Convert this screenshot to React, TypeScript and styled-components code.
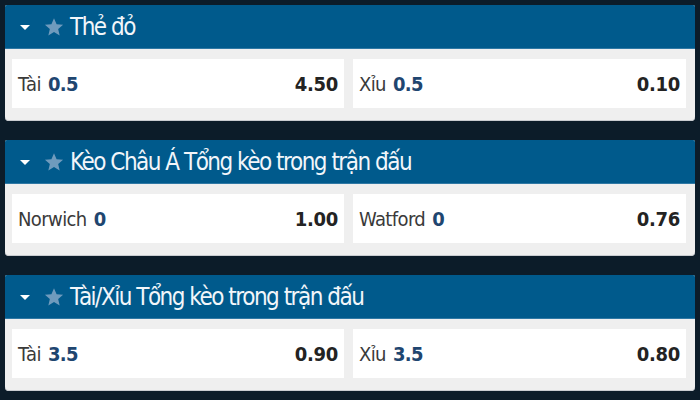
import styled, { createGlobalStyle } from "styled-components";

const GlobalStyle = createGlobalStyle`
  html, body {
    margin: 0;
    padding: 0;
    background: #0c1c29;
  }
  body {
    font-family: "DejaVu Sans Condensed", "Liberation Sans", sans-serif;
  }
`;

const Page = styled.div`
  width: 700px;
  height: 400px;
  padding: 5px 5px 0 5px;
  box-sizing: border-box;
  display: flex;
  flex-direction: column;
  gap: 19px;
  background: #0c1c29;
`;

const Card = styled.div`
  height: 116px;
  display: flex;
  flex-direction: column;
  border-radius: 2px 2px 4px 4px;
  overflow: hidden;
  background: #efefef;
  box-shadow: inset 0 -1px 0 #c9ccd0;
`;

const Header = styled.div`
  height: 44px;
  flex: none;
  display: flex;
  align-items: center;
  padding-left: 15px;
  background: #005a8c;
  border-bottom: 1px solid #2f78a4;
  box-sizing: border-box;
  color: #f2f6fa;
`;

const Caret = styled.span`
  width: 0;
  height: 0;
  border-left: 5px solid transparent;
  border-right: 5px solid transparent;
  border-top: 5px solid #ffffff;
  margin-top: 2px;
`;

const StarIcon = styled.svg`
  width: 20px;
  height: 20px;
  margin-left: 14px;
  margin-right: 6px;
`;

const Title = styled.span`
  font-size: 24px;
  letter-spacing: -1.5px;
  line-height: 1;
  margin-top: 1px;
`;

const Body = styled.div`
  flex: 1;
  display: grid;
  grid-template-columns: 332px 333px;
  gap: 9px;
  padding: 10px 9px 0 7px;
  align-content: start;
`;

const Cell = styled.div`
  height: 49px;
  background: #ffffff;
  display: flex;
  align-items: center;
  justify-content: space-between;
  padding: 0 6px 0 6px;
  box-sizing: border-box;
`;

const Label = styled.span`
  font-size: 20px;
  letter-spacing: -0.6px;
  color: #3a3a3a;
`;

const Handicap = styled.span`
  color: #1f4670;
  font-weight: bold;
  margin-left: 7px;
`;

const Odds = styled.span`
  font-size: 20px;
  font-weight: bold;
  letter-spacing: -0.3px;
  color: #232323;
`;

const Star = () => (
  <StarIcon viewBox="0 0 24 24">
    <path
      d="M12 1.5l3.1 7.2 7.8.7-5.9 5.1 1.8 7.6L12 18.1l-6.8 4 1.8-7.6L1.1 9.4l7.8-.7z"
      fill="#6f9bbd"
    />
  </StarIcon>
);

type Side = { name: string; line: string; odds: string };

const markets: { title: string; sides: Side[] }[] = [
  {
    title: "Thẻ đỏ",
    sides: [
      { name: "Tài", line: "0.5", odds: "4.50" },
      { name: "Xỉu", line: "0.5", odds: "0.10" },
    ],
  },
  {
    title: "Kèo Châu Á Tổng kèo trong trận đấu",
    sides: [
      { name: "Norwich", line: "0", odds: "1.00" },
      { name: "Watford", line: "0", odds: "0.76" },
    ],
  },
  {
    title: "Tài/Xỉu Tổng kèo trong trận đấu",
    sides: [
      { name: "Tài", line: "3.5", odds: "0.90" },
      { name: "Xỉu", line: "3.5", odds: "0.80" },
    ],
  },
];

export default function App() {
  return (
    <>
      <GlobalStyle />
      <Page>
        {markets.map((m) => (
          <Card key={m.title}>
            <Header>
              <Caret />
              <Star />
              <Title>{m.title}</Title>
            </Header>
            <Body>
              {m.sides.map((s) => (
                <Cell key={s.name}>
                  <Label>
                    {s.name}
                    <Handicap>{s.line}</Handicap>
                  </Label>
                  <Odds>{s.odds}</Odds>
                </Cell>
              ))}
            </Body>
          </Card>
        ))}
      </Page>
    </>
  );
}
